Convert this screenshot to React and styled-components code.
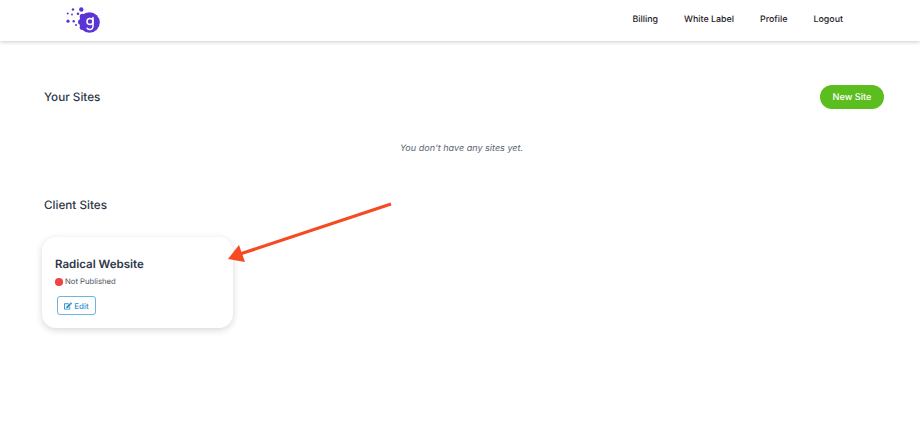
import React from 'react';
import styled, { createGlobalStyle } from 'styled-components';
import { FaEdit } from 'react-icons/fa';

const Global = createGlobalStyle`
  html, body { margin: 0; padding: 0; background: #fff; }
  body {
    font-family: Inter, "Liberation Sans", sans-serif;
    overflow: hidden;
    text-rendering: geometricPrecision;
  }
  * { box-sizing: border-box; }
`;

const Page = styled.div`
  position: relative;
  width: 920px;
  height: 434px;
  background: #fff;
`;

const Header = styled.header`
  display: flex;
  align-items: center;
  justify-content: space-between;
  height: 41px;
  padding: 0 77px 0 66px;
  background: #fff;
  box-shadow: 0 1px 4px rgba(0, 0, 0, 0.2);
`;

const Nav = styled.nav`
  display: flex;
  gap: 26px;
  padding-bottom: 1px;
`;

const NavLink = styled.a`
  font-size: 8.9px;
  font-weight: 500;
  color: #1f2328;
  line-height: 16px;
`;

const Main = styled.main`
  padding: 44px 36px 0 44px;
`;

const TitleRow = styled.div`
  display: flex;
  align-items: center;
  justify-content: space-between;
  height: 24px;
`;

const SectionTitle = styled.h2`
  margin: 0 0 1px;
  font-size: 11.7px;
  font-weight: 500;
  color: #2d3748;
`;

const NewSite = styled.button`
  width: 64px;
  height: 24px;
  padding: 0;
  border: 0;
  border-radius: 12px;
  background: #5cbd1f;
  color: #fff;
  font: 500 9.2px Inter, sans-serif;
  text-rendering: geometricPrecision;
`;

const Empty = styled.p`
  margin: 32px 0 0;
  padding-right: 5px;
  text-align: center;
  font-size: 9.05px;
  font-style: italic;
  line-height: 16px;
  color: #5a6472;
`;

const ClientTitle = styled(SectionTitle)`
  margin: 40px 0 0;
  line-height: 16px;
`;

const Card = styled.section`
  width: 191px;
  height: 91px;
  margin: 24px 0 0 -2px;
  padding: 19px 13px;
  border-radius: 14px;
  background: #fff;
  box-shadow: 0 2px 7px rgba(0, 0, 0, 0.16);
`;

const CardTitle = styled.h3`
  margin: 0;
  font-size: 11.5px;
  line-height: 16px;
  font-weight: 600;
  color: #2d3748;
`;

const Status = styled.div`
  display: flex;
  align-items: center;
  gap: 2.5px;
  margin-top: 4px;
  font-size: 7.7px;
  line-height: 12px;
  color: #4a5360;
`;

const Dot = styled.span`
  width: 7.5px;
  height: 7.5px;
  border-radius: 50%;
  background: #ef4444;
`;

const EditButton = styled.button`
  display: flex;
  align-items: center;
  justify-content: center;
  gap: 2px;
  width: 39px;
  height: 19px;
  margin: 8px 0 0 2px;
  padding: 0;
  border: 1px solid #6db3e3;
  border-radius: 3px;
  background: #fff;
  color: #2b8fd3;
  font: 500 7.9px Inter, sans-serif;
  text-rendering: geometricPrecision;
`;

const Arrow = styled.svg`
  position: absolute;
  left: 220px;
  top: 195px;
`;

function Logo() {
  return (
    <svg width="36" height="36" viewBox="0 0 36 36">
      <g fill="#5b34d6">
        <circle cx="23.5" cy="19.5" r="10.3" />
        <circle cx="16.5" cy="13.5" r="2.8" />
        <circle cx="14.5" cy="19" r="2.5" />
        <circle cx="16" cy="24.5" r="2.4" />
        <circle cx="15.3" cy="6.5" r="2.2" />
        <circle cx="7" cy="6.5" r="1.2" />
        <circle cx="1.7" cy="10.5" r="1" />
        <circle cx="6" cy="11.5" r="0.9" />
        <circle cx="12" cy="10.8" r="1.3" />
        <circle cx="2" cy="18.2" r="1.6" />
        <circle cx="7.7" cy="18.2" r="1.2" />
        <circle cx="10" cy="22" r="1" />
      </g>
      <g fill="none" stroke="#fff" strokeWidth="1.5" strokeLinecap="round">
        <circle cx="24" cy="18.5" r="3" />
        <path d="M27 14.5V23.5a3.2 3.2 0 0 1-5.8 1.7" />
      </g>
    </svg>
  );
}

export default function App() {
  return (
    <Page>
      <Global />
      <Header>
        <Logo />
        <Nav>
          <NavLink>Billing</NavLink>
          <NavLink>White Label</NavLink>
          <NavLink>Profile</NavLink>
          <NavLink>Logout</NavLink>
        </Nav>
      </Header>
      <Main>
        <TitleRow>
          <SectionTitle>Your Sites</SectionTitle>
          <NewSite>New Site</NewSite>
        </TitleRow>
        <Empty>You don't have any sites yet.</Empty>
        <ClientTitle>Client Sites</ClientTitle>
        <Card>
          <CardTitle>Radical Website</CardTitle>
          <Status>
            <Dot />
            Not Published
          </Status>
          <EditButton>
            <FaEdit size={8} />
            Edit
          </EditButton>
        </Card>
      </Main>
      <Arrow width="180" height="75" viewBox="0 0 180 75">
        <line x1="171" y1="9" x2="20" y2="59" stroke="#f54a22" strokeWidth="3.2" />
        <polygon points="8,64 19,50 25,67" fill="#f54a22" />
      </Arrow>
    </Page>
  );
}
